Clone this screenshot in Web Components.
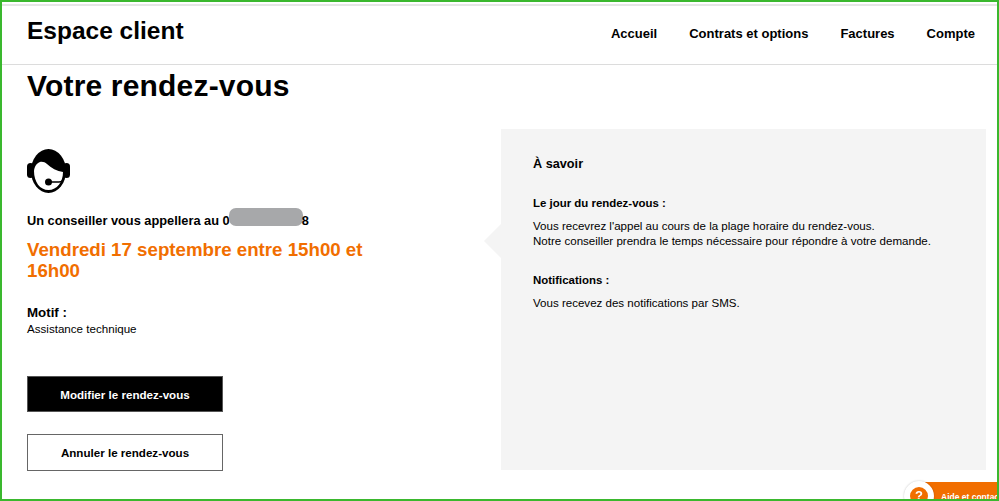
<!DOCTYPE html>
<html lang="fr">
<head>
<meta charset="utf-8">
<title>Votre rendez-vous</title>
<style>
  html, body { margin: 0; height: 100%; }
  body { font-family: "Liberation Sans", Arial, sans-serif; color: #000; background: #fff; overflow: hidden; }
</style>
</head>
<body>
<client-page>
  <site-header slot="header" site-name="Espace client"></site-header>
  <h1 slot="title">Votre rendez-vous</h1>
  <appointment-card slot="left"></appointment-card>
  <info-panel slot="right"></info-panel>
</client-page>
<help-tab></help-tab>

<script>
/**
 * Page frame: green outline, header, title and the two columns
 */
class ClientPage extends HTMLElement {
  constructor() {
    super();
    this.attachShadow({ mode: 'open' });
  }

  connectedCallback() {
    this.shadowRoot.innerHTML = `
      <style>
        :host {
          display: block;
          box-sizing: border-box;
          width: 999px;
          height: 501px;
          border: 2px solid #3ab82e;
          overflow: hidden;
        }
        .title {
          padding: 4px 0 0 25px;
          height: 60px;
        }
        ::slotted(h1) {
          margin: 0;
          font-size: 30px;
          line-height: 34px;
          font-weight: 700;
          letter-spacing: .18px;
        }
        .columns {
          display: flex;
          align-items: flex-start;
          padding-left: 25px;
        }
        .left { width: 474px; padding-top: 20px; }
        .right { width: 485px; }
      </style>
      <slot name="header"></slot>
      <div class="title"><slot name="title"></slot></div>
      <div class="columns">
        <div class="left"><slot name="left"></slot></div>
        <div class="right"><slot name="right"></slot></div>
      </div>
    `;
  }
}

class SiteHeader extends HTMLElement {
  constructor() {
    super();
    this.attachShadow({ mode: 'open' });
  }

  connectedCallback() {
    const name = this.getAttribute('site-name');
    this.shadowRoot.innerHTML = `
      <style>
        :host {
          display: flex;
          justify-content: space-between;
          box-sizing: border-box;
          height: 61px;
          margin-top: 2px;
          padding: 0 22px 0 25px;
          border-top: 2px solid #e6e6e6;
          border-bottom: 1px solid #dcdcdc;
        }
        .name { font-size: 24.5px; line-height: 28px; font-weight: 700; margin-top: 11px; }
        nav { display: flex; gap: 32px; margin-top: 19px; }
        a { font-size: 13px; line-height: 18px; font-weight: 700; color: #000; text-decoration: none; }
      </style>
      <div class="name">${name}</div>
      <nav>
        <a href="#">Accueil</a>
        <a href="#">Contrats et options</a>
        <a href="#">Factures</a>
        <a href="#">Compte</a>
      </nav>
    `;
  }
}

class AppointmentCard extends HTMLElement {
  constructor() {
    super();
    this.attachShadow({ mode: 'open' });
  }

  connectedCallback() {
    this.shadowRoot.innerHTML = `
      <style>
        :host { display: block; }
        svg { display: block; width: 44px; height: 44px; }
        .phone {
          margin: 20px 0 0;
          font-size: 12.8px;
          line-height: 16px;
          font-weight: 700;
          white-space: nowrap;
        }
        /* number is hidden in the reference, only first and last digit show */
        .mask {
          display: inline-block;
          vertical-align: top;
          width: 74px;
          height: 18px;
          margin: -5px -1px -1px -1px;
          border-radius: 7px;
          background: #a7a8aa;
        }
        .when {
          margin: 10px 0 0;
          width: 345px;
          font-size: 18.7px;
          line-height: 21px;
          font-weight: 700;
          color: #f16e00;
        }
        .label { margin-top: 23px; font-size: 13.3px; line-height: 17px; font-weight: 700; }
        .value { font-size: 11.6px; line-height: 15px; }
        .actions { display: flex; flex-direction: column; gap: 22px; margin-top: 40px; }
      </style>
      <svg viewBox="0 0 44 44" aria-hidden="true">
        <ellipse cx="21.500" cy="22" rx="17.500" ry="22" fill="#000"/>
        <path fill="#fff" d="M7 22C7.500 17 10 14 13 13c3-.500 5 .500 7 2 4 4 10 7 16 8 0 10-6 18-14.500 18S7 33 7 22z"/>
        <rect x="0" y="14" width="7" height="15" rx="3.500" fill="#000"/>
        <rect x="36" y="14" width="7" height="15" rx="3.500" fill="#000"/>
        <circle cx="21.500" cy="33" r="3.500" fill="#000"/>
        <path fill="none" stroke="#000" stroke-width="1.500" d="M21.500 33H32c2.500 0 4.500-2 5-5"/>
      </svg>
      <div class="phone">Un conseiller vous appellera au 0<span class="mask"></span>8</div>
      <div class="when">Vendredi 17 septembre entre 15h00 et 16h00</div>
      <div class="label">Motif :</div>
      <div class="value">Assistance technique</div>
      <div class="actions">
        <action-button variant="solid">Modifier le rendez-vous</action-button>
        <action-button>Annuler le rendez-vous</action-button>
      </div>
    `;
  }
}

class ActionButton extends HTMLElement {
  constructor() {
    super();
    this.attachShadow({ mode: 'open' });
  }

  connectedCallback() {
    this.shadowRoot.innerHTML = `
      <style>
        :host {
          display: flex;
          align-items: center;
          justify-content: center;
          box-sizing: border-box;
          width: 196px;
          height: 37px;
          border: 1px solid #666;
          background: #fff;
          color: #000;
          font-size: 11.6px;
          font-weight: 700;
        }
        :host([variant="solid"]) { background: #000; border-color: #555; color: #fff; height: 36px; }
      </style>
      <slot></slot>
    `;
  }
}

class InfoPanel extends HTMLElement {
  constructor() {
    super();
    this.attachShadow({ mode: 'open' });
  }

  connectedCallback() {
    this.shadowRoot.innerHTML = `
      <style>
        :host {
          display: block;
          position: relative;
          box-sizing: border-box;
          height: 341px;
          padding: 27px 32px;
          background: #f4f4f4;
          font-size: 11.55px;
          line-height: 15px;
        }
        :host::before {
          content: "";
          position: absolute;
          left: -17px;
          top: 95px;
          border: solid transparent;
          border-width: 17px 17px 17px 0;
          border-right-color: #f4f4f4;
        }
        h2 { margin: 0 0 23px; font-size: 12.7px; line-height: 17px; font-weight: 700; }
        h3 { margin: 0 0 8px; font-size: 11.45px; line-height: 15px; font-weight: 700; }
        p { margin: 0 0 24px; }
      </style>
      <h2>À savoir</h2>
      <h3>Le jour du rendez-vous :</h3>
      <p>Vous recevrez l'appel au cours de la plage horaire du rendez-vous.<br>Notre conseiller prendra le temps nécessaire pour répondre à votre demande.</p>
      <h3>Notifications :</h3>
      <p>Vous recevez des notifications par SMS.</p>
    `;
  }
}

// Fixed help tab, sits over the bottom right corner
class HelpTab extends HTMLElement {
  constructor() {
    super();
    this.attachShadow({ mode: 'open' });
  }

  connectedCallback() {
    this.shadowRoot.innerHTML = `
      <style>
        :host {
          position: fixed;
          left: 902px;
          right: 2px;
          top: 479px;
          bottom: 2px;
          overflow: hidden;
          color: #fff;
          font-size: 8.5px;
          font-weight: 700;
        }
        .bar {
          position: absolute;
          left: 14px;
          right: 0;
          top: 3px;
          height: 30px;
          background: #f16e00;
          padding: 10px 0 0 25px;
          white-space: nowrap;
          line-height: 10px;
        }
        .disc {
          position: absolute;
          left: 2px;
          top: 2px;
          box-sizing: border-box;
          width: 30px;
          height: 30px;
          border: 6px solid #fff;
          border-radius: 50%;
          background: #f16e00;
          box-shadow: 0 0 2px rgba(0, 0, 0, .25);
          font-size: 13px;
          line-height: 18px;
          text-align: center;
        }
      </style>
      <div class="bar">Aide et contact</div>
      <div class="disc">?</div>
    `;
  }
}

customElements.define('client-page', ClientPage);
customElements.define('site-header', SiteHeader);
customElements.define('appointment-card', AppointmentCard);
customElements.define('action-button', ActionButton);
customElements.define('info-panel', InfoPanel);
customElements.define('help-tab', HelpTab);
</script>
</body>
</html>
